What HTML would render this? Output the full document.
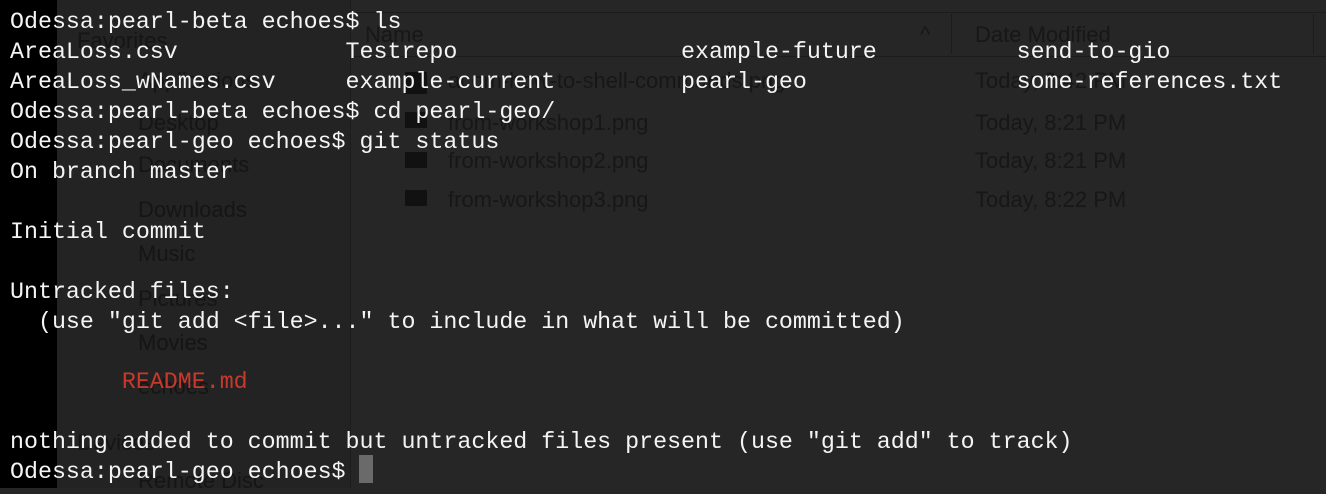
<!DOCTYPE html>
<html><head><meta charset="utf-8"><style>
body{margin:0;width:1326px;height:488px;overflow:hidden;background:#262626;position:relative;font-family:"Liberation Sans",sans-serif}
.a{position:absolute}
.g{position:absolute;color:#151515;font-size:22px;white-space:nowrap}
.gd{position:absolute;color:#171717;font-size:22px;white-space:nowrap}
#term{position:absolute;left:10px;top:7px;font-family:"Liberation Mono",monospace;font-size:23.3px;line-height:30px;color:#f4f4f4;white-space:pre;margin:0}
.r{color:#c8392b}
</style></head><body>
<div class="a" style="left:0;top:0;width:57px;height:488px;background:#000"></div>
<div class="a" style="left:57px;top:0;width:293px;height:488px;background:#232323"></div>
<div class="a" style="left:350px;top:0;width:1px;height:488px;background:#1c1c1c"></div>
<div class="a" style="left:351px;top:12px;width:975px;height:1px;background:#1c1c1c"></div>
<div class="a" style="left:351px;top:56px;width:975px;height:1px;background:#1c1c1c"></div>
<div class="a" style="left:951px;top:14px;width:1px;height:40px;background:#1c1c1c"></div>
<div class="a" style="left:1313px;top:14px;width:1px;height:40px;background:#1c1c1c"></div>
<div class="gd" style="left:365px;top:22px">Name</div>
<div class="gd" style="left:975px;top:22px">Date Modified</div>
<div class="gd" style="left:920px;top:22px">^</div>
<div class="g" style="left:77px;top:28px">Favorites</div>
<div class="g" style="left:138px;top:68px">Applications</div>
<div class="g" style="left:138px;top:110px">Desktop</div>
<div class="g" style="left:138px;top:152px">Documents</div>
<div class="g" style="left:138px;top:197px">Downloads</div>
<div class="g" style="left:138px;top:241px">Music</div>
<div class="g" style="left:138px;top:286px">Pictures</div>
<div class="g" style="left:138px;top:330px">Movies</div>
<div class="g" style="left:138px;top:374px">echoes</div>
<div class="g" style="left:77px;top:430px">Devices</div>
<div class="g" style="left:138px;top:468px">Remote Disc</div>
<div class="a" style="left:405px;top:72px;width:22px;height:22px;background:#111"></div>
<div class="a" style="left:405px;top:112px;width:22px;height:16px;background:#111"></div>
<div class="a" style="left:405px;top:152px;width:22px;height:16px;background:#111"></div>
<div class="a" style="left:405px;top:190px;width:22px;height:16px;background:#111"></div>
<div class="gd" style="left:448px;top:68px">acom-how-to-shell-commands.png</div>
<div class="gd" style="left:448px;top:110px">from-workshop1.png</div>
<div class="gd" style="left:448px;top:148px">from-workshop2.png</div>
<div class="gd" style="left:448px;top:187px">from-workshop3.png</div>
<div class="gd" style="left:975px;top:68px">Today, 8:42 PM</div>
<div class="gd" style="left:975px;top:110px">Today, 8:21 PM</div>
<div class="gd" style="left:975px;top:148px">Today, 8:21 PM</div>
<div class="gd" style="left:975px;top:187px">Today, 8:22 PM</div>
<div class="a" style="left:359px;top:455px;width:14px;height:28px;background:#6a6a6a"></div>
<pre id="term">Odessa:pearl-beta echoes$ ls
AreaLoss.csv            Testrepo                example-future          send-to-gio
AreaLoss_wNames.csv     example-current         pearl-geo               some-references.txt
Odessa:pearl-beta echoes$ cd pearl-geo/
Odessa:pearl-geo echoes$ git status
On branch master

Initial commit

Untracked files:
  (use "git add &lt;file&gt;..." to include in what will be committed)

        <span class="r">README.md</span>

nothing added to commit but untracked files present (use "git add" to track)
Odessa:pearl-geo echoes$ </pre>
</body></html>
